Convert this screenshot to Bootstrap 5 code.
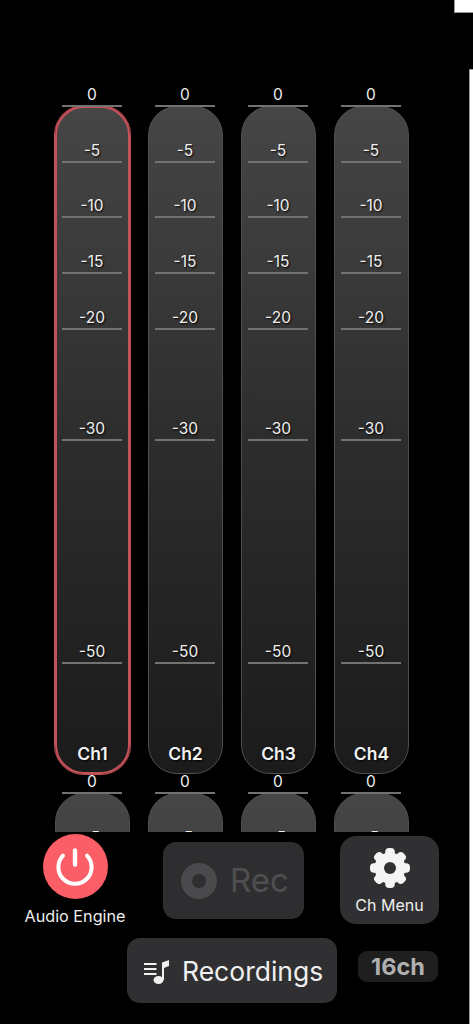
<!DOCTYPE html>
<html lang="en">
<head>
<meta charset="utf-8">
<title>Meters</title>
<link href="https://cdn.jsdelivr.net/npm/bootstrap@5.3.0/dist/css/bootstrap.min.css" rel="stylesheet">
<style>
html,body{margin:0;height:1024px;overflow:hidden;background:#000;}
body{font-family:Inter,"Liberation Sans",sans-serif;color:#f2f2f2;position:relative;}
.corner-white{position:absolute;top:0;right:0;width:19px;height:13px;background:#fff;border-left:1px solid #999;border-bottom:1px solid #999;}
.edge-white{position:absolute;top:69px;right:0;width:4px;bottom:0;background:#fff;border-left:1px solid #999;border-top:1px solid #999;}
.meter-area{height:832px;overflow:hidden;padding:106px 0 0 55px;}
.strip-row{gap:18px;margin-bottom:19px;}
.strip{position:relative;width:75px;height:668px;flex:none;}
.track{height:100%;border:1px solid #4f4f4f;border-radius:29px;background:linear-gradient(#464646,#2d2d2d 50%,#1b1b1b);}
.strip-on .track{border:2px solid #c4525a;box-shadow:0 0 0 1px #b94c54;}
.scale{position:absolute;left:7px;right:8px;top:-23px;}
.tick{border-bottom:2px solid #727272;display:flex;align-items:flex-end;justify-content:center;font-size:15.5px;line-height:18px;padding-bottom:1px;color:#f0f0f0;text-shadow:1px 1px 2px #000;}
.chan-name{position:absolute;left:0;right:0;bottom:10px;text-align:center;font-size:17.5px;line-height:20px;font-weight:600;color:#f2f2f2;text-shadow:1px 1px 2px #000;}
.controls{height:192px;}
.top-line{height:106px;padding-top:2px;}
.power-col{width:100px;margin-left:25px;}
.power-btn{width:65px;height:65px;background:#fb5e66;border-radius:50%;border:0;padding:0;display:flex;align-items:center;justify-content:center;}
.power-label{font-size:16.2px;line-height:20px;margin-top:7px;white-space:nowrap;color:#eee;}
.rec-btn{width:141px;height:77px;margin:8px 0 0 38px;background:#2e2e30;border-radius:13px;border:0;color:#4f4f51;font-size:33px;gap:13px;padding:0 0 0 18px;}
.menu-btn{width:99px;height:88px;margin:2px 0 0 36px;background:#303032;border:0;border-radius:16px;color:#eee;font-size:16px;padding:12px 0 0;line-height:20px;}
.menu-text{margin-top:7px;}
.rec-bottom{padding-left:127px;}
.songs-btn{width:210px;height:65px;background:#303032;border:0;border-radius:13px;color:#f0f0f0;font-size:26.5px;gap:12px;padding:3px 0 0 17px;}
.songs-icon{margin-top:-3px;}
.count-tag{width:80px;height:31px;margin:13px 0 0 21px;background:#1f1f1f;border-radius:9px;color:#b0b0b0;font-size:23.5px;font-weight:700;}
</style>
</head>
<body>
<div class="corner-white"></div>
<div class="edge-white"></div>
<main class="meter-area" id="m"></main>
<section class="controls">
  <div class="top-line d-flex align-items-start">
    <div class="power-col d-flex flex-column align-items-center">
      <button class="power-btn" aria-label="Audio Engine">
        <svg width="40" height="40" viewBox="0 0 40 40" fill="none" stroke="#fff" stroke-width="4" stroke-linecap="round"><path d="M8 8.700A16.600 16.600 0 1 0 32 8.700"/><path d="M20 3.500V17.500" stroke-width="4.400"/></svg>
      </button>
      <div class="power-label">Audio Engine</div>
    </div>
    <button class="rec-btn d-flex align-items-center">
      <svg width="36" height="36" viewBox="0 0 36 36"><circle cx="18" cy="18" r="18" fill="#4a4a4c"/><circle cx="18" cy="18" r="7" fill="#2e2e30"/></svg>
      <span>Rec</span>
    </button>
    <button class="menu-btn d-flex flex-column align-items-center">
      <svg width="40" height="40" viewBox="-20 -20 40 40" fill="#f4f4f4">
        <circle r="15.500"/>
        <rect x="-4.800" y="-20" width="9.600" height="40" rx="4"/>
        <rect x="-4.800" y="-20" width="9.600" height="40" rx="4" transform="rotate(45)"/>
        <rect x="-4.800" y="-20" width="9.600" height="40" rx="4" transform="rotate(90)"/>
        <rect x="-4.800" y="-20" width="9.600" height="40" rx="4" transform="rotate(135)"/>
        <circle r="6" fill="#303032"/>
      </svg>
      <span class="menu-text">Ch Menu</span>
    </button>
  </div>
  <div class="rec-bottom d-flex align-items-start">
    <button class="songs-btn d-flex align-items-center">
      <svg class="songs-icon" width="26" height="26" viewBox="0 0 26 26"><path d="M0 6h12.500M0 11h12.500M0 16h12.500" stroke="#f0f0f0" stroke-width="1.800" fill="none"/><path fill="#f0f0f0" d="M18 4.500 25 2v6l-5 2v12h-2Z"/><ellipse cx="14.500" cy="22" rx="5" ry="4" fill="#f0f0f0"/></svg>
      <span>Recordings</span>
    </button>
    <div class="count-tag d-flex align-items-center justify-content-center">16ch</div>
  </div>
</section>
<script>
var levels=[[0,24],[-5,55.7],[-10,55.8],[-15,55.8],[-20,55.7],[-30,111.3],[-50,222.7]];
function strip(n){
  var t=n<=4?levels:levels.slice(0,2);
  var s='<div class="strip'+(n===1?' strip-on':'')+'"><div class="track"></div><div class="scale">';
  t.forEach(function(l){s+='<div class="tick" style="height:'+l[1]+'px">'+l[0]+'</div>';});
  s+='</div>';
  if(n<=4)s+='<div class="chan-name">Ch'+n+'</div>';
  return s+'</div>';
}
var h='';
[[1,2,3,4],[5,6,7,8]].forEach(function(r){
  h+='<div class="strip-row d-flex">'+r.map(strip).join('')+'</div>';
});
document.getElementById('m').innerHTML=h;
</script>
<script src="https://cdn.jsdelivr.net/npm/bootstrap@5.3.0/dist/js/bootstrap.bundle.min.js"></script>
</body>
</html>
